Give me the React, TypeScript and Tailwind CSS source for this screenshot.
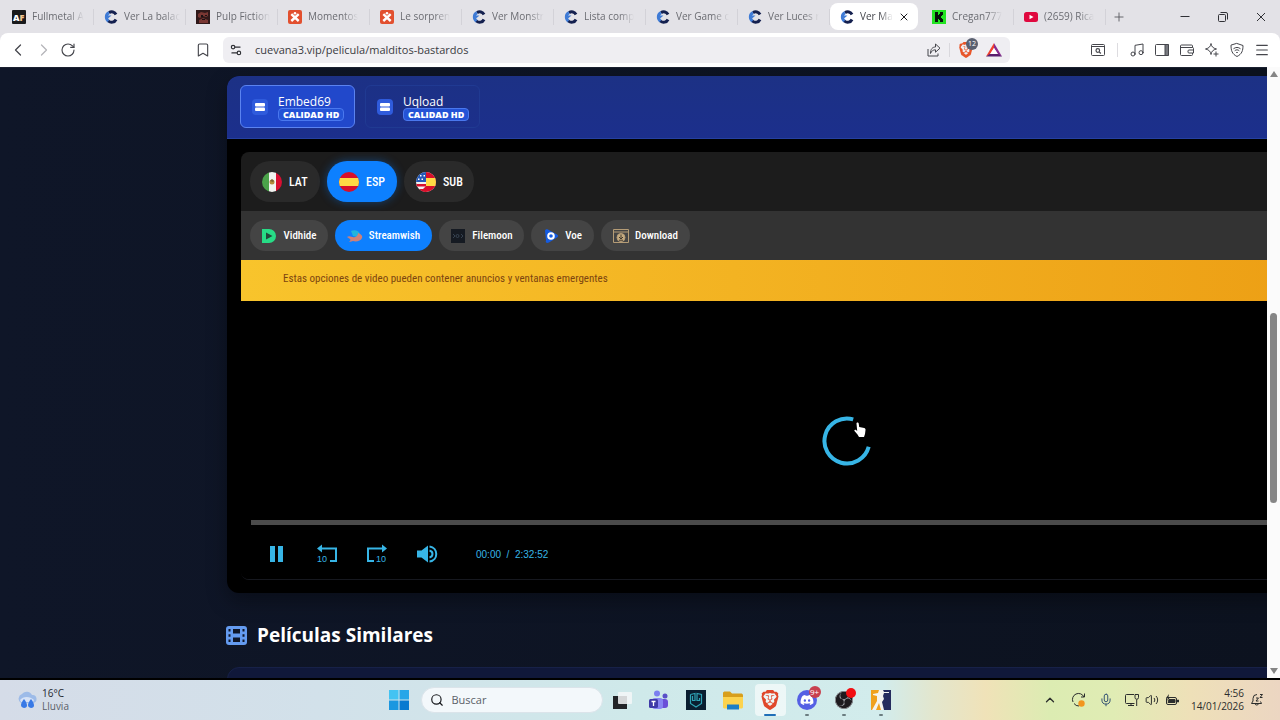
import type { ReactNode } from "react";
import {
  Bookmark,
  ChevronLeft,
  ChevronRight,
  ChevronUp,
  Menu,
  Mic,
  Music,
  Plus,
  RotateCw,
  Search,
  Settings2,
  Volume2,
  X,
} from "lucide-react";
import { FaDiscord } from "react-icons/fa6";
import { SiBrave, SiObsstudio } from "react-icons/si";

const CuevanaIcon = () => (
  <svg viewBox="0 0 14 14" className="size-3.5 shrink-0" fill="none" strokeWidth="3">
    <path d="M12 4.500A4.800 4.800 0 0 0 5 2.700" stroke="#14204f" />
    <path d="M5 2.700A4.800 4.800 0 0 0 5 11.300" stroke="#3f7bd6" />
    <path d="M4.500 11A4.800 4.800 0 0 0 12 9.500" stroke="#14204f" />
    <path d="M3 5.500h4.500L4 8.500z" fill="#3f7bd6" />
  </svg>
);

const AfIcon = () => (
  <svg viewBox="0 0 14 14" className="size-3.5 shrink-0">
    <rect width="14" height="14" rx="1" fill="#191a1c" />
    <text x="1" y="10.500" fontSize="9" fontWeight="800" fontFamily="Open Sans" fill="#fff">
      A<tspan fill="#f0c38e">F</tspan>
    </text>
  </svg>
);

const PulpIcon = () => (
  <svg viewBox="0 0 14 14" className="size-3.5 shrink-0">
    <rect width="14" height="14" fill="#30191a" />
    <path d="M2 4l3-2 4 1 3-1v4l-2 1-3-1-3 2-2-1zM3 10l4-2 5 2v3H3z" fill="#793733" />
    <path d="M5 5h2v2H5zM9 5h2v1H9zM6 9h3v1H6z" fill="#1b1113" />
  </svg>
);

const XIcon = () => (
  <svg viewBox="0 0 14 14" className="size-3.5 shrink-0">
    <rect width="14" height="14" rx="2" fill="#e2502f" />
    <path d="M3.300 4.200 10.700 11M10.700 4.200 3.300 11" stroke="#fff" strokeWidth="2.400" />
    <circle cx="7" cy="3.200" r="1.300" fill="#fff" />
  </svg>
);

const KickIcon = () => (
  <svg viewBox="0 0 14 14" className="size-3.5 shrink-0">
    <rect width="14" height="14" fill="#22e322" />
    <path d="M3 2h3v3h1V4h1V2h3v3h-1v1H9v2h1v1h1v3H8v-2H7V9H6v3H3z" fill="#06130a" />
  </svg>
);

const YoutubeIcon = () => (
  <svg viewBox="0 0 14 14" className="size-3.5 shrink-0">
    <rect y="2" width="14" height="10" rx="2.500" fill="#e0093f" />
    <path d="M5.500 4.700v4.600L9.500 7z" fill="#fff" />
  </svg>
);

const tabs = [
  { title: "Fullmetal A", icon: <AfIcon /> },
  { title: "Ver La balac", icon: <CuevanaIcon /> },
  { title: "Pulp Fiction", icon: <PulpIcon /> },
  { title: "Momentos", icon: <XIcon /> },
  { title: "Le sorpren", icon: <XIcon /> },
  { title: "Ver Monstr", icon: <CuevanaIcon /> },
  { title: "Lista comp", icon: <CuevanaIcon /> },
  { title: "Ver Game c", icon: <CuevanaIcon /> },
  { title: "Ver Luces r", icon: <CuevanaIcon /> },
  { title: "Ver Ma", icon: <CuevanaIcon />, active: true },
  { title: "Cregan777", icon: <KickIcon /> },
  { title: "(2659) Rica", icon: <YoutubeIcon /> },
];

const TabStrip = () => (
  <div className="flex h-[33px] shrink-0 items-center bg-[#e3e2e7] pl-0.5">
    {tabs.map((tab, i) =>
      tab.active ? (
        <div key={i} className="mr-1 flex h-[27px] w-[88px] shrink-0 items-center rounded-lg bg-white pl-2.5 pr-2">
          {tab.icon}
          <button className="ml-1.5 whitespace-nowrap text-left text-[10px] text-[#44464c] mask-r-from-60%">
            {tab.title}
          </button>
          <button aria-label="Cerrar" className="ml-auto">
            <X className="size-3 text-[#1c1c20]" />
          </button>
        </div>
      ) : (
        <button key={i} className="flex h-[27px] w-[92px] shrink-0 items-center pl-2.5 text-left">
          {tab.icon}
          <span className="ml-1.5 whitespace-nowrap text-[10px] text-[#6b6c72] mask-r-from-70%">{tab.title}</span>
          <span className="ml-auto h-4 w-px bg-[#d3d2d8]" />
        </button>
      ),
    )}
    <button aria-label="Nueva pestaña" className="ml-1.5">
      <Plus className="size-3.5 text-[#55565c]" strokeWidth={1.5} />
    </button>
    <div className="ml-auto flex items-center gap-6 pr-3 text-[#303136]">
      <button aria-label="Minimizar">
        <svg viewBox="0 0 14 14" className="size-3.5" stroke="currentColor">
          <path d="M2.500 6.500h9" />
        </svg>
      </button>
      <button aria-label="Restaurar">
        <svg viewBox="0 0 14 14" className="size-3.5" fill="none" stroke="currentColor">
          <rect x="2.500" y="4.500" width="7" height="7" rx="1" />
          <path d="M4.500 2.500h5.500a1.500 1.500 0 0 1 1.500 1.500v5.500" />
        </svg>
      </button>
      <button aria-label="Cerrar ventana">
        <svg viewBox="0 0 14 14" className="size-3.5" stroke="currentColor">
          <path d="M3 3l8 8M11 3l-8 8" />
        </svg>
      </button>
    </div>
  </div>
);

const Toolbar = () => (
  <div className="bg-[#e3e2e7]">
    <div className="flex h-[34px] items-center rounded-t-lg bg-white text-[#45464c]">
      <div className="flex w-[211px] items-center pl-2">
        <button aria-label="Atrás">
          <ChevronLeft className="size-5" strokeWidth={1.5} />
        </button>
        <button aria-label="Adelante" className="ml-1.5 text-[#b5b5b9]">
          <ChevronRight className="size-5" strokeWidth={1.5} />
        </button>
        <button aria-label="Recargar" className="ml-1.5">
          <RotateCw className="size-4" strokeWidth={1.7} />
        </button>
        <button aria-label="Marcador" className="ml-auto">
          <Bookmark className="size-4" strokeWidth={1.7} />
        </button>
      </div>
      <div className="ml-3 flex h-[26px] w-[787px] items-center rounded-md bg-[#efeef2] px-1.5">
        <Settings2 className="size-3.5 text-[#303136]" strokeWidth={2} />
        <input
          aria-label="Dirección"
          className="ml-3 flex-1 bg-transparent text-[11px] text-[#3a3b41] outline-none"
          defaultValue="cuevana3.vip/pelicula/malditos-bastardos"
        />
        <button aria-label="Compartir">
          <svg viewBox="0 0 14 14" className="size-3.5" fill="none" stroke="currentColor">
            <path d="M1 6v7h10v-2.500M3.500 10.500C3.500 6 5.500 4 8.500 4V1L13 5.200 8.500 9.200V6.800c-2.500 0-4 1.200-5 3.700z" strokeLinejoin="round" />
          </svg>
        </button>
        <span className="mx-2 h-3.5 w-px bg-[#d9d8dd]" />
        <button aria-label="Brave Shields" className="relative">
          <SiBrave className="size-4 text-[#e8562a]" />
          <span className="absolute -top-1 left-2 flex size-3 items-center justify-center rounded-full bg-[#5a6070] text-[7px] text-white">
            12
          </span>
        </button>
        <button aria-label="Brave Rewards" className="ml-3 mr-0.5">
          <svg viewBox="0 0 16 14" className="h-3.5 w-4">
            <path d="M8 0 0 13.500l4-2L8 5z" fill="#f0402f" />
            <path d="M8 0l8 13.500-4-2L8 5z" fill="#8a2b8f" />
            <path d="M0 13.500h16l-4-2.800H4z" fill="#5a1e6e" />
            <path d="M8 5l4 6H4z" fill="#fff" />
          </svg>
        </button>
      </div>
      <div className="ml-auto flex items-center gap-[9px] pr-2.5">
        <button aria-label="Buscar en pestañas">
          <svg viewBox="0 0 16 16" className="size-4" fill="none" stroke="currentColor">
            <rect x="1.500" y="2.500" width="13" height="11" rx="1" />
            <path d="M2 4.500h12" />
            <circle cx="7.800" cy="8.500" r="1.800" strokeWidth="1.200" />
            <path d="M9.300 10l1.500 1.500" strokeWidth="1.200" />
          </svg>
        </button>
        <span className="ml-0.5 mr-0.5 h-3.5 w-px bg-[#dddce0]" />
        <button aria-label="Música">
          <Music className="size-4" strokeWidth={1.5} />
        </button>
        <button aria-label="Panel lateral">
          <svg viewBox="0 0 16 16" className="size-4" fill="none" stroke="currentColor">
            <rect x="1.500" y="2.500" width="13" height="11" rx="1" />
            <path d="M11 2.500h3.500v11H11z" fill="#77787e" />
          </svg>
        </button>
        <button aria-label="Cartera">
          <svg viewBox="0 0 16 16" className="size-4" fill="none" stroke="currentColor">
            <path d="M13.500 5.500V4a1 1 0 0 0-1-1h-10a1 1 0 0 0-1 1v8.500a1 1 0 0 0 1 1h10a1 1 0 0 0 1-1V11M1.500 5.500h12a1 1 0 0 1 1 1v4.500H10a1 1 0 0 1-1-1V9a1 1 0 0 1 1-1h4.500" />
          </svg>
        </button>
        <button aria-label="Leo">
          <svg viewBox="0 0 16 16" className="size-4" fill="none" stroke="currentColor" strokeLinejoin="round">
            <path d="M7 1.500c.6 3.200 1.800 4.600 5.500 5.500C8.800 7.900 7.600 9.300 7 12.500 6.400 9.300 5.200 7.900 1.500 7 5.200 6.100 6.400 4.700 7 1.500zM12 9.500v5M9.500 12h5" />
          </svg>
        </button>
        <button aria-label="VPN">
          <svg viewBox="0 0 16 16" className="size-4" fill="none" stroke="currentColor" strokeLinecap="round">
            <path d="M8 1.500l6 2c0 5-1 8.500-6 11-5-2.500-6-6-6-11z" />
            <path d="M4.800 6.500c2-1.500 4.400-1.500 6.400 0M6 8.500c1.200-1 2.800-1 4 0M7.600 10.500h.8" />
          </svg>
        </button>
        <button aria-label="Menú">
          <Menu className="size-4" strokeWidth={1.7} />
        </button>
      </div>
    </div>
  </div>
);

const ServerIcon = () => (
  <span className="flex size-4 shrink-0 items-center justify-center rounded bg-[#2f5bdc]">
    <svg viewBox="0 0 10 10" className="size-2.5" fill="#fff">
      <rect y="1" width="10" height="3.500" rx="1" />
      <rect y="5.500" width="10" height="3.500" rx="1" />
    </svg>
  </span>
);

const servers = [
  { name: "Embed69", style: "border-[#5b83f0] bg-[#2148cb]" },
  { name: "Uqload", style: "border-[#203a92] bg-transparent" },
];

const MexicoFlag = () => (
  <svg viewBox="0 0 20 20" className="size-5 shrink-0 rounded-full">
    <path d="M0 0h7v20H0z" fill="#4ba24a" />
    <path d="M7 0h7v20H7z" fill="#f3f3f0" />
    <path d="M14 0h6v20h-6z" fill="#d80f32" />
    <circle cx="10" cy="10" r="2.500" fill="#b48a3c" />
    <path d="M8 9l2-2 2 2-1 1z" fill="#7c6230" />
  </svg>
);

const SpainFlag = () => (
  <svg viewBox="0 0 20 20" className="size-5 shrink-0 rounded-full">
    <path d="M0 0h20v20H0z" fill="#d80f2a" />
    <path d="M0 6h20v8H0z" fill="#ffda44" />
  </svg>
);

const SubFlag = () => (
  <svg viewBox="0 0 20 20" className="size-5 shrink-0 rounded-full">
    <path d="M0 0h20v20H0z" fill="#f2f2f2" />
    <path d="M10 0h10v20H4l6-6z" fill="#d80f2a" />
    <path d="M10 6h10v8H10z" fill="#ffda44" />
    <path d="M0 0h10v10H0z" fill="#2459b5" />
    <path d="M0 12h10v2.500H0zM0 17h10v3H0z" fill="#d80f2a" />
    <path d="M4 3h1.500v1.500H4zM7.500 3H9v1.500H7.500zM2 6.500h1.500V8H2zM5.500 6.500H7V8H5.500z" fill="#fff" />
  </svg>
);

const languages = [
  { name: "LAT", flag: <MexicoFlag /> },
  { name: "ESP", flag: <SpainFlag />, active: true },
  { name: "SUB", flag: <SubFlag /> },
];

const sources = [
  {
    name: "Vidhide",
    width: "w-[78px]",
    icon: (
      <svg viewBox="0 0 16 16" className="size-4">
        <path d="M1 1h7a7 7 0 0 1 0 14H1z" fill="#27dc86" />
        <path d="M5 4.500v7L11.500 8z" fill="#23483a" />
      </svg>
    ),
  },
  {
    name: "Streamwish",
    width: "w-[97px]",
    active: true,
    icon: (
      <svg viewBox="0 0 16 16" className="size-4">
        <path d="M4 3c4-2 8 0 9 3l-2 3-5-1z" fill="#21b4dd" />
        <path d="M0 9c3-2 5 1 8 0 2-.5 3-2 3-4 3 1 5 3 4 5-1 3-6 4-9 3-1 0-2 1-4 1 1-1 2-2 1-3z" fill="#cf8177" />
      </svg>
    ),
  },
  {
    name: "Filemoon",
    width: "w-[85px]",
    icon: (
      <svg viewBox="0 0 16 16" className="size-4">
        <path d="M1 1h14v14H1z" fill="#151a22" />
        <path d="M3 6l2 2-2 2M6 8a1.500 1.500 0 1 0 3 0 1.500 1.500 0 0 0-3 0M11 6l2 2-2 2" fill="none" stroke="#3f4c5c" strokeWidth=".8" />
      </svg>
    ),
  },
  {
    name: "Voe",
    width: "w-[63px]",
    icon: (
      <svg viewBox="0 0 16 16" className="size-4">
        <path d="M2 3c0-2 2-2 3-1.500l9 5c1.500 1 1.500 2 0 3l-8 5c-2 1-4 0-3-2z" fill="#155be0" />
        <circle cx="8" cy="8" r="2.800" fill="#155be0" stroke="#fff" strokeWidth="2" />
      </svg>
    ),
  },
  {
    name: "Download",
    width: "w-[89px]",
    icon: (
      <svg viewBox="0 0 16 16" className="size-4" fill="none" stroke="#b59c76">
        <path d="M.5 1.500h15v13H.5zM.5 4h15" />
        <circle cx="8" cy="9.500" r="4" fill="#c5ab80" />
        <path d="M8 6.500v4M6 9l2 2 2-2M6 12.200h4" stroke="#40382d" />
      </svg>
    ),
  },
];

const PlayerControls = () => (
  <div className="flex h-[54px] items-center pl-7 pt-1 text-[#37b5e6]">
    <button aria-label="Pausar" className="w-12">
      <svg viewBox="0 0 16 18" className="h-[18px] w-4" fill="currentColor">
        <path d="M1 1h5v16H1zM9 1h5v16H9z" />
      </svg>
    </button>
    <button aria-label="Retroceder 10 segundos" className="w-[50px]">
      <svg viewBox="0 0 20 20" className="size-5" fill="none" stroke="currentColor" strokeWidth="2">
        <path d="M4 4.500h15v12.500h-6" />
        <path d="M0 4.500 5 .5v8z" fill="currentColor" stroke="none" />
        <text x="0" y="18" fontSize="9" fontFamily="Liberation Sans" fill="currentColor" stroke="none">
          10
        </text>
      </svg>
    </button>
    <button aria-label="Avanzar 10 segundos" className="w-[50px]">
      <svg viewBox="0 0 20 20" className="size-5" fill="none" stroke="currentColor" strokeWidth="2">
        <path d="M16 4.500H1v12.500h6" />
        <path d="M20 4.500 15 .5v8z" fill="currentColor" stroke="none" />
        <text x="9" y="18" fontSize="9" fontFamily="Liberation Sans" fill="currentColor" stroke="none">
          10
        </text>
      </svg>
    </button>
    <button aria-label="Volumen" className="w-[59px]">
      <svg viewBox="0 0 22 20" className="h-5 w-[22px]" fill="none" stroke="currentColor" strokeWidth="2">
        <path d="M0 6.500h4.500L11 1.500v17L4.500 13.500H0z" fill="currentColor" stroke="none" />
        <path d="M12.500 2.500c9 1 9 14 0 15M12.500 6.500c4 1 4 6 0 7" />
      </svg>
    </button>
    <span className="font-['Liberation_Sans'] text-[10px]">00:00 &nbsp;/&nbsp; 2:32:52</span>
  </div>
);

const Player = () => (
  <section className="ml-[227px] -mr-[200px] overflow-hidden rounded-xl bg-black shadow-[0_8px_20px_rgba(0,0,0,0.35)]">
    <div className="flex h-[63px] items-start gap-2.5 border-b border-[#25409f] bg-linear-to-b from-[#1c3185] to-[#1c2f8c] px-[13px] pt-[9px]">
      {servers.map(server => (
        <button
          key={server.name}
          className={`flex h-[43px] w-[115px] items-center rounded-md border pl-[11px] text-left ${server.style}`}
        >
          <ServerIcon />
          <span className="ml-2.5 flex flex-col items-start pt-0.5">
            <span className="text-[12px] font-medium leading-[13px] text-white">{server.name}</span>
            <span className="rounded border border-[#4a78ee] bg-[#2453d6] px-1 text-[9px] font-extrabold leading-[11px] text-white">
              CALIDAD HD
            </span>
          </span>
        </button>
      ))}
    </div>
    <div className="px-3.5 py-[13px] font-['Roboto_Condensed','Liberation_Sans_Narrow',Roboto,sans-serif]">
      <div className="overflow-hidden rounded-lg border-b border-[#16181f]">
        <div className="flex h-[59px] items-center gap-[7px] bg-[#1c1c1c] px-[9px]">
          {languages.map(language => (
            <button
              key={language.name}
              className={`flex h-[41px] w-[70px] items-center gap-[7px] rounded-[20px] pl-3 text-[12px] font-medium text-white ${
                language.active ? "bg-[#0d80ff] shadow-[0_0_10px_rgba(13,128,255,0.4)]" : "bg-[#2a2a2a]"
              }`}
            >
              {language.flag}
              {language.name}
            </button>
          ))}
        </div>
        <div className="flex h-[49px] items-center gap-[7px] bg-[#333333] px-[9px]">
          {sources.map(source => (
            <button
              key={source.name}
              className={`flex h-[31px] items-center justify-center gap-1.5 whitespace-nowrap rounded-full text-[11px] font-medium leading-4 text-white ${source.width} ${
                source.active ? "bg-[#0d80ff]" : "bg-[#444444]"
              }`}
            >
              {source.icon}
              <span className="pt-px">{source.name}</span>
            </button>
          ))}
        </div>
        <p className="h-[41px] bg-linear-to-r from-[#f8c42c] to-[#eb9a10] pl-[42px] text-[11px] leading-[38px] text-[#7c4510]">
          Estas opciones de video pueden contener anuncios y ventanas emergentes
        </p>
        <div className="flex flex-col bg-black">
          <div className="flex h-[219px] items-center justify-center pt-[60px]">
            <div className="relative">
              <svg viewBox="0 0 50 50" className="size-[50px]" fill="none" stroke="#37b5e6" strokeWidth="4">
                <path d="M46.700 30.800A22.500 22.500 0 1 1 31.200 3.400" />
              </svg>
              <svg viewBox="0 0 12 16" className="absolute left-8 top-1.5 h-4 w-3">
                <path
                  d="M2.500 1.500c0-1.300 2-1.300 2.200 0L5.200 5l5 1c1 .3 1.400 1 1.300 2L11 12l-1 3H5L3.500 12.500.5 9c-.6-1 .6-1.800 1.500-1l1.200 1z"
                  fill="#fff"
                />
              </svg>
            </div>
          </div>
          <input
            type="range"
            aria-label="Progreso"
            defaultValue={0}
            className="mx-2.5 h-[5px] appearance-none bg-[#4b4b4b] [&::-webkit-slider-thumb]:size-0 [&::-webkit-slider-thumb]:appearance-none"
          />
          <PlayerControls />
        </div>
      </div>
    </div>
  </section>
);

const FilmIcon = () => (
  <svg viewBox="0 0 21 19" className="h-[19px] w-[21px]">
    <rect width="21" height="19" rx="3" fill="#649bf0" />
    <path
      d="M7 3h7v4.500H7zM7 11.500h7V16H7zM2.500 3h2v2.500h-2zM2.500 8.300h2v2.500h-2zM2.500 13.500h2V16h-2zM16.500 3h2v2.500h-2zM16.500 8.300h2v2.500h-2zM16.500 13.500h2V16h-2z"
      fill="#0f1628"
    />
  </svg>
);

const TaskIcon = ({ children, label, open, active }: { children: ReactNode; label: string; open?: boolean; active?: boolean }) => (
  <button aria-label={label} className="flex h-10 w-[37px] items-center justify-center">
    <span className={`relative flex h-8 w-[31px] items-center justify-center rounded ${active ? "bg-white/60" : ""}`}>
      {children}
      {open && (
        <span className={`absolute bottom-0 h-0.5 rounded-full ${active ? "w-3 bg-[#1f6fb8]" : "w-1 bg-[#6b7d80]"}`} />
      )}
    </span>
  </button>
);

const Taskbar = () => (
  <footer className="grid h-10 shrink-0 grid-cols-[1fr_auto_1fr] items-center bg-[linear-gradient(90deg,#d5dce8_0%,#d2e1ea_25%,#cfe9ea_50%,#d2ecec_69%,#e3e6cd_73%,#f0e2b8_77%,#dcecb2_82%,#e0ecb4_87%,#eee0b8_93%,#ecd6c2_100%)]">
    <button className="flex items-center gap-1 pl-4 text-left text-[10px] leading-[13px] text-[#25282e]">
      <svg viewBox="0 0 22 22" className="size-[22px]">
        <path d="M5 14a5 5 0 0 1 1-9 6 6 0 0 1 10 1 4 4 0 0 1 1 8z" fill="#9dbbe8" />
        <path d="M4 11c3-4 10-4 14 0l-1 2H5z" fill="#d6e2f6" />
        <path d="M8 10c4 5 4 9 0 9-4-1-4-4 0-9zM15 10c4 5 4 9 0 9-4-1-4-4 0-9z" fill="#3879e6" />
      </svg>
      <span>
        16°C
        <br />
        <span className="text-[#5a5f68]">Lluvia</span>
      </span>
    </button>
    <div className="flex items-center">
      <TaskIcon label="Inicio">
        <svg viewBox="0 0 20 20" className="size-5">
          <path d="M0 0h9.500v9.500H0z" fill="#43c3f2" />
          <path d="M10.500 0H20v9.500h-9.500z" fill="#27a6e8" />
          <path d="M0 10.500h9.500V20H0z" fill="#1b97e0" />
          <path d="M10.500 10.500H20V20h-9.500z" fill="#0a7ad0" />
        </svg>
      </TaskIcon>
      <label className="ml-[3px] mr-px flex h-[26px] w-[182px] items-center gap-2 rounded-full border border-[#dbe4ea] bg-[#f3f8fb] pl-2">
        <Search className="size-3.5 text-[#16181c]" strokeWidth={2} />
        <input aria-label="Buscar" placeholder="Buscar" className="w-24 bg-transparent text-[11px] outline-none placeholder:text-[#5b6068]" />
      </label>
      <TaskIcon label="Vista de tareas">
        <svg viewBox="0 0 20 20" className="size-5">
          <path d="M1 6h14v13H1z" fill="#222427" />
          <rect x="6" y="2" width="14" height="12" rx="1" fill="#f5f7f8" fillOpacity=".85" />
        </svg>
      </TaskIcon>
      <TaskIcon label="Teams">
        <svg viewBox="0 0 20 20" className="size-5">
          <circle cx="8" cy="3.500" r="3" fill="#7b7ff0" />
          <circle cx="16" cy="6" r="2.500" fill="#5b50c8" />
          <rect x="11" y="9" width="8" height="9" rx="3" fill="#6b4fd8" />
          <rect x="3" y="8" width="11" height="11" rx="3" fill="#8784f2" />
          <rect y="9" width="9" height="9" rx="1.500" fill="#3f3aa8" />
          <path d="M2.500 11.500h4M4.500 11.500v4.500" stroke="#fff" strokeWidth="1.300" />
        </svg>
      </TaskIcon>
      <TaskIcon label="PG">
        <svg viewBox="0 0 20 20" className="size-5" fill="none" stroke="#2fa3b5" strokeWidth="1.200">
          <path d="M0 0h20v20H0z" fill="#0a1e30" stroke="none" />
          <path d="M4.500 4.500 9 3.500v7H6M4.500 4.500v9L10 17l5.500-3.500v-9L11 3.500v7h2.500V8M6.500 6v4" />
        </svg>
      </TaskIcon>
      <TaskIcon label="Explorador">
        <svg viewBox="0 0 20 20" className="size-5">
          <path d="M0 3c0-1 1-1.500 2-1.500h5l2 2h9c1 0 2 .5 2 2V10H0z" fill="#d89f1c" />
          <path d="M0 7h20v10c0 1-1 1.500-2 1.500H2c-1 0-2-.5-2-1.500z" fill="#fcd34e" />
          <path d="M4 14.500h12v5H4z" fill="#1c7ec6" />
        </svg>
      </TaskIcon>
      <TaskIcon label="Brave" open active>
        <SiBrave className="size-5 text-[#e0482b]" />
      </TaskIcon>
      <TaskIcon label="Discord" open>
        <span className="flex size-5 items-center justify-center rounded-full bg-[#5560e4]">
          <FaDiscord className="size-3.5 text-white" />
        </span>
        <span className="absolute right-0.5 top-0.5 flex size-3 items-center justify-center rounded-full bg-[#c8404e] text-[8px] text-white">
          9+
        </span>
      </TaskIcon>
      <TaskIcon label="OBS" open>
        <SiObsstudio className="size-[18px] rounded-full bg-[#1e1b1f] text-[#a9abb0]" />
        <span className="absolute right-1 top-1 size-2.5 rounded-full bg-[#f20e12]" />
      </TaskIcon>
      <TaskIcon label="Counter-Strike" open>
        <svg viewBox="0 0 20 20" className="size-5">
          <path d="M0 0h10v20H0z" fill="#f0a11e" />
          <path d="M10 0h10v20H10z" fill="#252c5e" />
          <path d="M8 0h4l1 2h5v1h-5l-1 3 1 3-2 3 2 8h-3l-2-7-3 7H1l5-9V6L2 5V4l5-1z" fill="#f4f4f0" />
        </svg>
      </TaskIcon>
    </div>
    <div className="flex h-10 items-center justify-end pr-4 text-[#2b2d2c]">
      <ChevronUp className="mr-3.5 size-3.5" strokeWidth={2.2} />
      <svg viewBox="0 0 16 16" className="mr-3 size-4" fill="none" stroke="currentColor">
        <path d="M2 10a6 6 0 0 1 11-5M13.500 1.500V5H10M3 11.500a6 6 0 0 0 5 2.500" />
        <circle cx="10.500" cy="11.500" r="3.200" fill="#f2951e" stroke="none" />
      </svg>
      <Mic className="mr-3 size-3.5 text-[#345272]" strokeWidth={1.7} />
      <svg viewBox="0 0 14 14" className="mr-1.5 size-3.5" fill="none" stroke="currentColor">
        <path d="M9 1.500H1.500a1 1 0 0 0-1 1v7a1 1 0 0 0 1 1h8M3 12.500h6M6 10.500v2" />
        <path d="M10 1.500h3.500v3a1.700 1.700 0 0 1-3.500 0zM11.700 6.500V13" />
      </svg>
      <Volume2 className="mr-1.5 size-3.5" strokeWidth={1.7} />
      <svg viewBox="0 0 14 14" className="mr-3 size-3.5" fill="none" stroke="currentColor">
        <rect x="1.500" y="4.500" width="10" height="7" rx="1.500" />
        <path d="M4 6.500h6v3H3zM12.500 7h1v2h-1z" fill="currentColor" />
        <path d="M4 1 1 5h2L2 8l3.500-4H3.500z" fill="currentColor" stroke="none" />
      </svg>
      <span className="mr-1.5 text-right text-[10px] leading-[13px]">
        4:56
        <br />
        14/01/2026
      </span>
      <svg viewBox="0 0 14 14" className="size-3.5" fill="none" stroke="currentColor">
        <path d="M7 1.500a4 4 0 0 0-4 4V8l-1.500 2.500h10L10.500 8.500M5 11a2 2 0 0 0 3.500 0M6 5h2.500L6 8h2.500M10 1.500h2.500L10 4.500h2.500" />
      </svg>
    </div>
  </footer>
);

export default function App() {
  return (
    <div className="flex h-screen flex-col overflow-hidden bg-[#0e1526] font-['Segoe_UI','Open_Sans',sans-serif]">
      <TabStrip />
      <Toolbar />
      <div className="flex min-h-0 flex-1 border-b-2 border-black">
        <main className="min-w-0 flex-1 overflow-hidden border-t border-[#1b2130] bg-linear-to-r from-[#0f1628] to-[#0c121f] pt-2">
          <Player />
          <h2 className="ml-[226px] mt-7 flex items-center gap-2.5 text-[19px] font-bold leading-7 text-white">
            <FilmIcon />
            Películas Similares
          </h2>
          <div className="ml-[227px] -mr-[200px] mt-[18px] h-24 rounded-xl border border-[#172148] bg-[#10183a]" />
        </main>
        <div className="flex w-[13px] shrink-0 flex-col items-center bg-[#fbfbfb] py-1">
          <svg viewBox="0 0 8 6" className="h-1.5 w-2" fill="#858585">
            <path d="M4 0l4 6H0z" />
          </svg>
          <div className="flex w-full flex-1 flex-col items-center">
            <div className="basis-[40%]" />
            <div className="w-[7px] basis-[32%] rounded-full bg-[#868686]" />
          </div>
          <svg viewBox="0 0 8 6" className="h-1.5 w-2" fill="#858585">
            <path d="M4 6l4-6H0z" />
          </svg>
        </div>
      </div>
      <Taskbar />
    </div>
  );
}
